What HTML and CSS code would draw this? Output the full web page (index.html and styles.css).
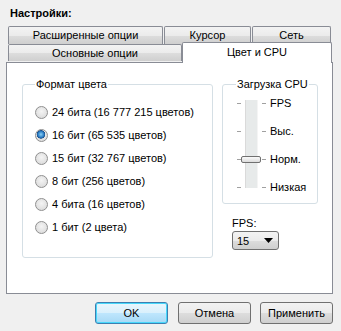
FILE: index.html
```html
<!DOCTYPE html>
<html lang="ru">
<head>
    <meta charset="UTF-8">
    <title>Настройки</title>
    <link rel="stylesheet" href="styles.css">
</head>
<body>
    <div class="dialog">
        <h1 class="title">Настройки:</h1>

        <!-- Tabs -->
        <div class="tabs">
            <div class="tab-row">
                <div class="tab tab-adv">Расширенные опции</div>
                <div class="tab tab-cursor">Курсор</div>
                <div class="tab tab-net">Сеть</div>
            </div>
            <div class="tab-row">
                <div class="tab tab-main">Основные опции</div>
                <div class="tab tab-active">Цвет и CPU</div>
            </div>
        </div>

        <div class="panel">
            <fieldset class="group group-color">
                <legend>Формат цвета</legend>
                <label class="radio"><input type="radio" name="depth"> 24 бита (16 777 215 цветов)</label>
                <label class="radio"><input type="radio" name="depth" checked> 16 бит (65 535 цветов)</label>
                <label class="radio"><input type="radio" name="depth"> 15 бит (32 767 цветов)</label>
                <label class="radio"><input type="radio" name="depth"> 8 бит (256 цветов)</label>
                <label class="radio"><input type="radio" name="depth"> 4 бита (16 цветов)</label>
                <label class="radio"><input type="radio" name="depth"> 1 бит (2 цвета)</label>
            </fieldset>

            <div class="right-col">
                <fieldset class="group group-cpu">
                    <legend>Загрузка CPU</legend>
                    <div class="slider-wrap">
                        <div class="slider">
                            <div class="track"></div>
                            <div class="ticks ticks-left"><i></i><i></i><i></i><i></i></div>
                            <div class="ticks ticks-right"><i></i><i></i><i></i><i></i></div>
                            <div class="thumb"></div>
                        </div>
                        <div class="slider-labels">
                            <span>FPS</span>
                            <span>Выс.</span>
                            <span>Норм.</span>
                            <span>Низкая</span>
                        </div>
                    </div>
                </fieldset>

                <div class="fps">
                    <div class="fps-label">FPS:</div>
                    <div class="select">
                        <span>15</span>
                        <svg width="9" height="5" viewBox="0 0 9 5"><path d="M0 0h9L4.5 5z" fill="#000"/></svg>
                    </div>
                </div>
            </div>
        </div>

        <div class="buttons">
            <button class="btn btn-default">OK</button>
            <button class="btn">Отмена</button>
            <button class="btn">Применить</button>
        </div>
    </div>
</body>
</html>
```

FILE: styles.css
```css
body {
    margin: 0;
    background-color: #f0f0f0;
    font-family: "Liberation Sans", Arial, sans-serif;
    font-size: 11px;
    color: #000;
}
.dialog {
    width: 341px;
    height: 331px;
    padding-top: 7px;
    box-sizing: border-box;
}
.title {
    margin: 0 0 0 10px;
    font-size: 11px;
    font-weight: bold;
    line-height: 13px;
}
/* Tabs */
.tabs {
    margin: 6px 0 0 8px;
}
.tab-row {
    display: flex;
}
.tab {
    box-sizing: border-box;
    height: 18px;
    line-height: 16px;
    text-align: center;
    border: 1px solid #898c95;
    border-bottom: none;
    border-radius: 2px 2px 0 0;
    background: linear-gradient(#f3f3f3, #ebebeb 50%, #dddddd 51%, #cfcfcf);
}
.tab-adv { width: 155px; margin-right: 1px; }
.tab-cursor { width: 87px; margin-right: 1px; }
.tab-net { width: 79px; }
.tab-main {
    width: 174px;
    height: 17px;
}
.tab-active {
    width: 150px;
    height: 21px;
    margin-top: -2px;
    margin-bottom: -1px;
    line-height: 18px;
    background: #fff;
    position: relative;
    z-index: 1;
}
.panel {
    margin-left: 6px;
    width: 327px;
    height: 232px;
    box-sizing: border-box;
    border: 1px solid #898c95;
    background: #fff;
    display: flex;
    align-items: flex-start;
    padding: 15px 0 0 15px;
}
/* Group boxes */
.group {
    margin: 0;
    border: 1px solid #d5dfe5;
    border-radius: 3px;
    box-sizing: border-box;
}
.group legend {
    padding: 0 1px;
    margin-left: 0;
    line-height: 13px;
}
.group-color {
    width: 191px;
    height: 180px;
    padding: 10px 0 0 12px;
}
.radio {
    display: flex;
    align-items: center;
    height: 23px;
    line-height: 13px;
}
.radio input {
    appearance: none;
    width: 13px;
    height: 13px;
    margin: 0 4px 0 0;
    border-radius: 50%;
    border: 1px solid #8f8f8f;
    background: radial-gradient(circle at 50% 40%, #f4f4f4, #d6d6d6);
    box-sizing: border-box;
}
.radio input:checked {
    background:
        radial-gradient(circle at 45% 40%, #8ad0f5 0, #2a7cc4 3px, #1a4f8a 4px, transparent 4.5px),
        radial-gradient(circle at 50% 40%, #f4f4f4, #d6d6d6);
}
.right-col {
    margin-left: 9px;
}
.group-cpu {
    width: 96px;
    height: 126px;
    padding: 0 0 0 13px;
}
.slider-wrap {
    display: flex;
    margin-top: 9px;
}
.slider {
    position: relative;
    width: 30px;
    height: 92px;
}
.track {
    position: absolute;
    left: 9px;
    top: 0;
    width: 13px;
    height: 88px;
    background: #e7eaea;
    border-left: 1px solid #dadada;
    border-right: 1px solid #f4f4f4;
    box-sizing: border-box;
}
.ticks {
    position: absolute;
    top: 3px;
    height: 85px;
    display: flex;
    flex-direction: column;
    justify-content: space-between;
}
.ticks i {
    display: block;
    width: 4px;
    height: 1px;
    background: #a0a0a0;
}
.ticks-left { left: 1px; }
.ticks-right { left: 26px; }
.thumb {
    position: absolute;
    left: 5px;
    top: 56px;
    width: 20px;
    height: 7px;
    box-sizing: border-box;
    border: 1px solid #707070;
    border-radius: 2px;
    background: linear-gradient(#fafafa, #dcdcdc);
}
.slider-labels {
    display: flex;
    flex-direction: column;
    justify-content: space-between;
    height: 97px;
    margin-top: -3px;
    margin-left: 4px;
    line-height: 13px;
}
/* FPS select */
.fps {
    margin: 13px 0 0 10px;
}
.fps-label {
    line-height: 13px;
}
.select {
    margin-top: 1px;
    width: 47px;
    height: 19px;
    box-sizing: border-box;
    border: 1px solid #707070;
    border-radius: 3px;
    background: linear-gradient(#f3f3f3, #ebebeb 50%, #dddddd 51%, #cfcfcf);
    display: flex;
    align-items: center;
    justify-content: space-between;
    padding: 0 5px 0 4px;
}
/* Buttons */
.buttons {
    display: flex;
    justify-content: flex-end;
    gap: 9px;
    margin: 8px 8px 0 0;
}
.btn {
    width: 73px;
    height: 22px;
    font-family: inherit;
    font-size: 11px;
    color: #000;
    border: 1px solid #707070;
    border-radius: 3px;
    background: linear-gradient(#f2f2f2, #ebebeb 50%, #dddddd 51%, #cfcfcf);
    padding: 0;
}
.btn-default {
    border-color: #3c7fb1;
    box-shadow: inset 0 0 0 1px #48d8fb;
    background: linear-gradient(#eaf6fd, #d9f0fc 50%, #bee6fd 51%, #a7d9f5);
    margin-right: 1px;
}
```
